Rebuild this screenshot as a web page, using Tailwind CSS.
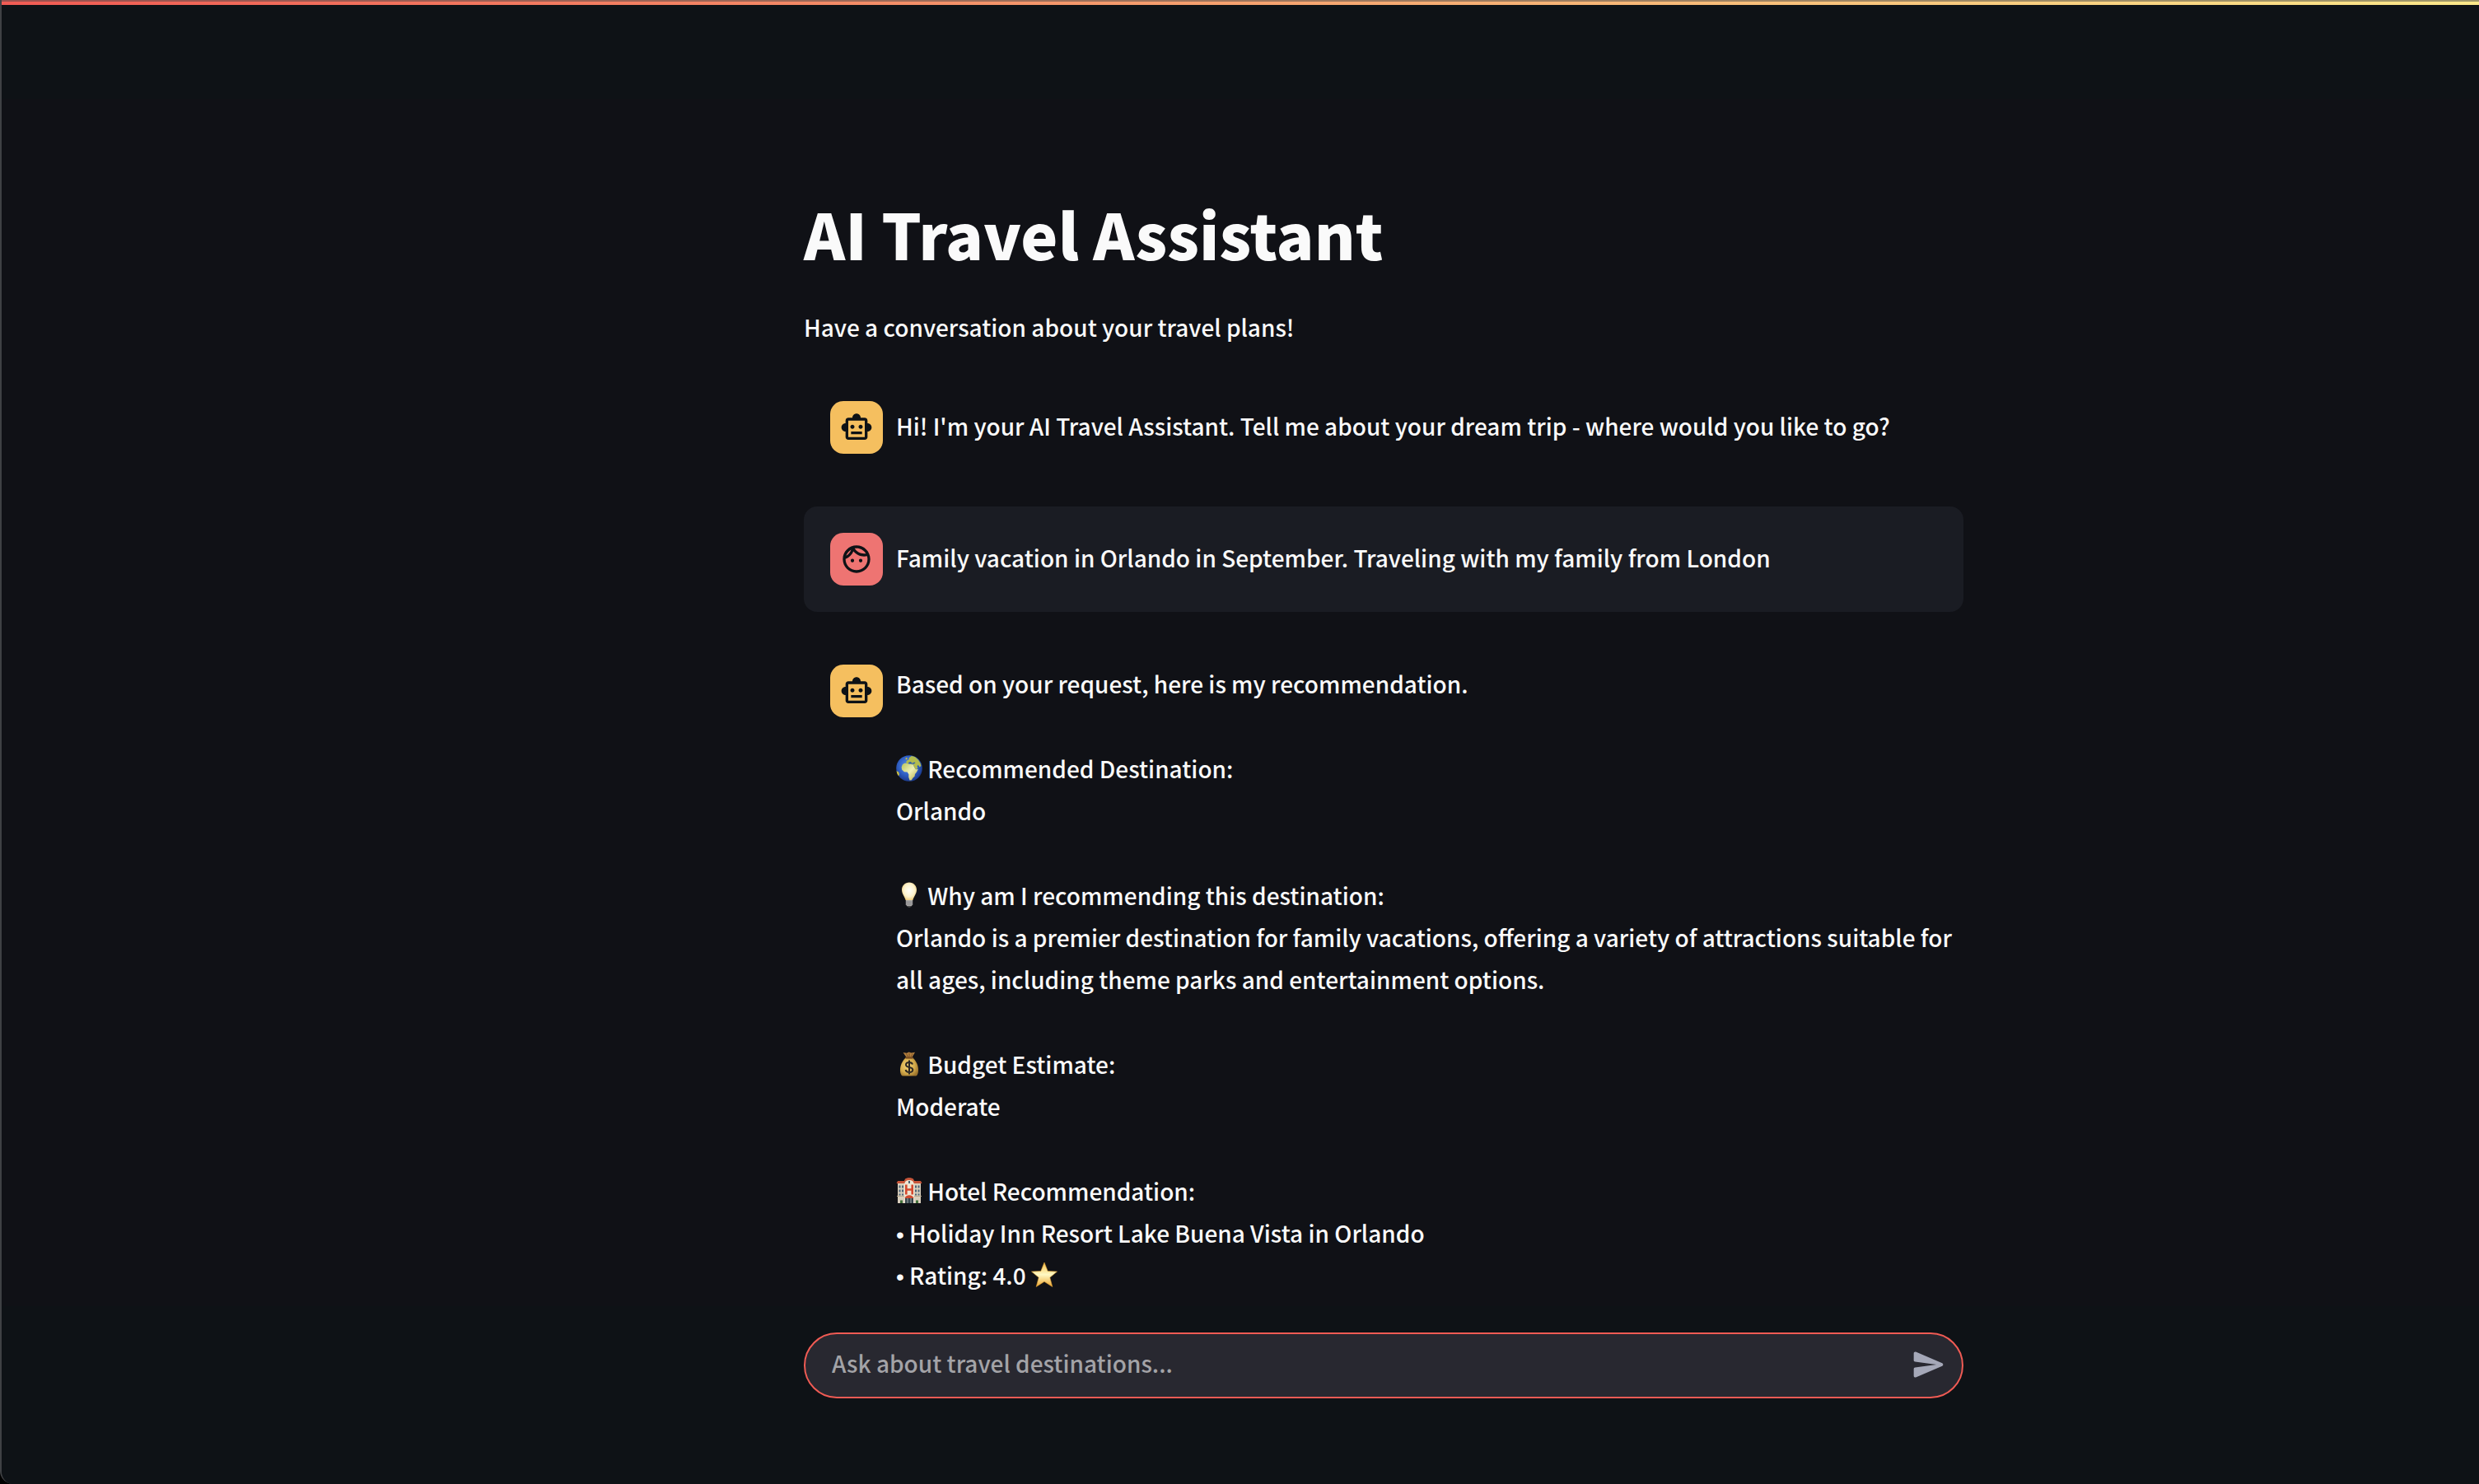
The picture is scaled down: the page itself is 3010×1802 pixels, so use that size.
<!DOCTYPE html>
<html lang="en">
<head>
<meta charset="utf-8">
<meta name="viewport" content="width=device-width, initial-scale=1">
<title>AI Travel Assistant</title>
<script src="https://cdn.jsdelivr.net/npm/@tailwindcss/browser@4"></script>
</head>
<body class="bg-black">
<svg class="hidden">
  <symbol id="bot" viewBox="0 0 24 24"><path d="M20 9V7c0-1.100-.9-2-2-2h-3c0-1.660-1.340-3-3-3S9 3.340 9 5H6c-1.100 0-2 .9-2 2v2c-1.660 0-3 1.340-3 3s1.340 3 3 3v4c0 1.100.9 2 2 2h12c1.100 0 2-.9 2-2v-4c1.660 0 3-1.340 3-3s-1.340-3-3-3zm-2 10H6V7h12v12zm-9-6c-.83 0-1.500-.67-1.500-1.500S8.170 10 9 10s1.500.67 1.500 1.500S9.830 13 9 13zm7.500-1.500c0 .83-.67 1.500-1.500 1.500s-1.500-.67-1.500-1.500.67-1.500 1.500-1.500 1.500.67 1.500 1.500zM8 15h8v2H8v-2z"/></symbol>
  <symbol id="face" viewBox="0 0 24 24"><path d="M10.250 13c0 .69-.56 1.250-1.250 1.250S7.750 13.690 7.750 13s.56-1.250 1.250-1.250 1.250.56 1.250 1.250zM15 11.750c-.69 0-1.250.56-1.250 1.250s.56 1.250 1.250 1.250 1.250-.56 1.250-1.250-.56-1.250-1.250-1.250zm7 .25c0 5.520-4.480 10-10 10S2 17.520 2 12 6.480 2 12 2s10 4.480 10 10zM10.660 4.120C12.060 6.440 14.600 8 17.500 8c.46 0 .91-.05 1.340-.12C17.440 5.560 14.900 4 12 4c-.46 0-.91.05-1.340.12zM4.420 9.470c1.710-.97 3.030-2.550 3.660-4.440C6.370 6 5.050 7.580 4.420 9.470zM20 12c0-.78-.12-1.530-.33-2.240-.7.150-1.420.24-2.170.24-3.130 0-5.920-1.440-7.760-3.690C8.690 8.870 6.600 10.880 4 11.860c.01.04 0 .09 0 .14 0 4.410 3.590 8 8 8s8-3.590 8-8z"/></symbol>
</svg>
<div class="relative flex min-h-screen flex-col overflow-hidden rounded-bl-[16px] border-l-2 border-[#3f4144] bg-[#101116] font-['Noto_Sans_CJK_SC',sans-serif] text-[28px] leading-[51px] font-medium text-[#fafafa]">
  <header class="h-30 bg-[#0e1216]">
    <div class="h-1.5 border-t-2 border-[#45474a]/50 bg-linear-to-r/srgb from-[#f05b54] to-[#fbe88a]"></div>
  </header>

  <main class="flex-1 pt-[110px] pl-[348px]">
    <div class="mx-auto max-w-[1408px]">
      <h1 class="text-[76px] leading-[106px] font-black">AI Travel Assistant</h1>
      <p class="mt-9">Have a conversation about your travel plans!</p>

      <section class="mt-8 flex flex-col gap-8" aria-label="Conversation">
        <article class="flex gap-4 py-8 pl-8">
          <div class="flex size-16 shrink-0 items-center justify-center rounded-2xl bg-[#f5bf5f] text-[#0e1216]"><svg class="size-10 fill-current" aria-hidden="true"><use href="#bot"/></svg></div>
          <div class="flex min-h-16 flex-1 flex-col justify-center pb-1"><p>Hi! I'm your AI Travel Assistant. Tell me about your dream trip - where would you like to go?</p></div>
        </article>

        <article class="flex gap-4 rounded-2xl bg-[#1a1c23] py-8 pl-8">
          <div class="flex size-16 shrink-0 items-center justify-center rounded-2xl bg-[#ee7472] text-[#0e1216]"><svg class="size-10 fill-current" aria-hidden="true"><use href="#face"/></svg></div>
          <div class="flex min-h-16 flex-1 flex-col justify-center pb-1"><p>Family vacation in Orlando in September. Traveling with my family from London</p></div>
        </article>

        <article class="flex gap-4 pt-8 pl-8">
          <div class="flex size-16 shrink-0 items-center justify-center rounded-2xl bg-[#f5bf5f] text-[#0e1216]"><svg class="size-10 fill-current" aria-hidden="true"><use href="#bot"/></svg></div>
          <div class="-mt-0.5 flex min-h-16 flex-1 flex-col gap-[52px]">
            <p>Based on your request, here is my recommendation.</p>
            <p>
              <svg class="inline size-8 align-[-4px]" viewBox="0 0 32 32" role="img" aria-label="Globe">
                <defs><radialGradient id="sea" cx=".45" cy=".4" r=".6"><stop offset="0" stop-color="#5b93ea"/><stop offset=".6" stop-color="#2f5fc4"/><stop offset="1" stop-color="#1b3a8c"/></radialGradient>
                <linearGradient id="land" x1="0" y1="0" x2="1" y2="1"><stop offset="0" stop-color="#b9c45a"/><stop offset=".5" stop-color="#eef0b4"/><stop offset="1" stop-color="#b5ac45"/></linearGradient></defs>
                <circle cx="16" cy="16" r="15.800" fill="url(#sea)"/>
                <path d="M7.500 12c1-2 3-2.500 5.500-2.300l2 1 3 .3 3 .6 1 3 2 2.600 2.800-.3-1.800 3.600-2 2.500-.5 2.800-2.200 2-1.500 2.400-2.300.2-1.200-3.600.1-3.600-1.700-2.700-3.800-.3-2.700-2.400-.6-3z" fill="url(#land)"/>
                <path d="M12 8.500l1.200-2 2.300-1.200.4-2.200 3-2 4 1 4 3.300 2.500 4 1 3.500-1.800 1.500-1.800-2.600-1.300 1.800 1 2.400-2.700 1.300-2-3.600-1-2.400-3-.3-1.500-1.400-1.800 1.500z" fill="#b2bc4e"/>
                <path d="M11.500 3.500l1.800-.8.300 2.200-1.800.6zM.6 19.200l2.400 1 1 2.800-.8 2.200C1.500 23.500.8 21.300.6 19.200z" fill="#c8bd42"/>
                <path d="M14.500 9l3-1 2.500 1.700 2-1.200 1.500.6-1.800 1.600-3-.2-2.600-.2z" fill="#2f5fb0"/>
              </svg> Recommended Destination:<br>
              Orlando
            </p>
            <p>
              <svg class="inline size-8 align-[-4px]" viewBox="0 0 32 32" role="img" aria-label="Light bulb">
                <defs><radialGradient id="glow" cx=".5" cy=".45" r=".6"><stop offset="0" stop-color="#fffffa"/><stop offset=".6" stop-color="#fdf3cd"/><stop offset="1" stop-color="#edc873"/></radialGradient></defs>
                <path d="M16 .5c-5.200 0-9 4-9 9 0 5.200 3.600 8 4.600 12.500h8.800C21.400 17.500 25 14.700 25 9.500c0-5-3.800-9-9-9z" fill="url(#glow)"/>
                <path d="M11.800 22h8.400v5.500l-1.800 2h-4.800l-1.800-2z" fill="#aaa9a8"/><path d="M12 24.300h8M12 26.800h8" stroke="#77767a" stroke-width=".8"/><path d="M14 29.300h4l-.8 1.700h-2.400z" fill="#444"/>
              </svg> Why am I recommending this destination:<br>
              Orlando is a premier destination for family vacations, offering a variety of attractions suitable for all ages, including theme parks and entertainment options.
            </p>
            <p>
              <svg class="inline size-8 align-[-4px]" viewBox="0 0 32 32" role="img" aria-label="Money bag">
                <defs><radialGradient id="sack" cx=".4" cy=".45" r=".65"><stop offset="0" stop-color="#f3d276"/><stop offset=".6" stop-color="#d6ad4c"/><stop offset="1" stop-color="#9a722c"/></radialGradient></defs>
                <path d="M8.500 2l4.500.8L15.500 1.500l3 1 4.500-.8-3.500 6h-7z" fill="#b27e3d"/><path d="M12.500 3.500l2 4M16 3v4.500M20 3.500l-2 4" stroke="#70481f" stroke-width=".8"/>
                <path d="M12 8h8c3 3 6.500 7.500 7 14 .3 4-1 8.500-3 8.500H8c-2 0-3.300-4.500-3-8.500C5.500 15.500 9 11 12 8z" fill="url(#sack)"/>
                <path d="M11.500 8.600h9" stroke="#7a4d22" stroke-width="2"/>
                <path d="M20 16.500c-.6-2-2-2.500-4-2.500-2.400 0-4 1-4 3 0 4.200 8.300 1.800 8.300 6 0 2-1.800 3-4.200 3-2.500 0-4.100-1-4.500-3M16 11.500v17" fill="none" stroke="#2c2823" stroke-width="2"/>
              </svg> Budget Estimate:<br>
              Moderate
            </p>
            <p>
              <svg class="inline size-8 align-[-4px]" viewBox="0 0 32 32" role="img" aria-label="Hotel">
                <path d="M2 6h28v25H2z" fill="#d9cfbd"/><path d="M10 6c0-7 12-7 12 0v25H10z" fill="#efe5d3"/>
                <path d="M.5 7l1.500-3h8l1-2.500C13.500-.3 18.500-.3 21 1.500L22 4h8l1.500 3H21.500c0-5.500-11-5.500-11 0z" fill="#c9553a"/>
                <path d="M12.300 8.500v12M19.700 8.500v12M12.300 14.500h7.400" stroke="#d4492f" stroke-width="2.600"/>
                <path d="M3.500 9.500h2v3h-2zm3.500 0h2v3H7zm-3.500 5h2v3h-2zm3.500 0h2v3H7zm-3.500 5h2v2h-2zm3.500 0h2v2H7zm16-10h2v3h-2zm3.500 0h2v3h-2zm-3.500 5h2v3h-2zm3.500 0h2v3h-2zm-3.500 5h2v2h-2zm3.500 0h2v2h-2zM15 4h2v3h-2z" fill="#4d6478"/>
                <path d="M11 24.500h10V31H11z" fill="#36454c"/><path d="M14 25v6M18 25v6" stroke="#9fa9a6"/><path d="M10.500 25c1.500-5 9.500-5 11 0z" fill="#cf4a31"/><path d="M1 22.500h9M22 22.500h9" stroke="#b9a88c"/><path d="M5 27.500h3V31H5zm19 0h3V31h-3z" fill="#43713c"/>
              </svg> Hotel Recommendation:<br>
              <span class="font-['Liberation_Sans',sans-serif] leading-none">•</span> Holiday Inn Resort Lake Buena Vista in Orlando<br>
              <span class="font-['Liberation_Sans',sans-serif] leading-none">•</span> Rating: 4.0 <svg class="inline size-8 align-[-4px]" viewBox="0 0 32 32" role="img" aria-label="Star">
                <defs><linearGradient id="gold" x1="0" y1="0" x2="0" y2="1"><stop offset="0" stop-color="#f4bd45"/><stop offset=".5" stop-color="#fff9c4"/><stop offset="1" stop-color="#eda62f"/></linearGradient></defs>
                <path d="M16 1l4.200 10.500 11.300.6-8.700 7.200 3 11.200L16 24.300 6.200 30.500l3-11.200L.5 12.100l11.300-.6z" fill="url(#gold)" stroke="#d99a30" stroke-width=".6" stroke-linejoin="round"/>
              </svg>
            </p>
          </div>
        </article>
      </section>
    </div>
  </main>

  <footer class="bg-[#0e1216] pt-8 pb-26 pl-[348px]">
    <form class="mx-auto flex h-20 max-w-[1408px] items-center rounded-full border-2 border-[#f05b54] bg-[#282830] pr-3 pb-0.5 pl-8">
      <input type="text" aria-label="Message" placeholder="Ask about travel destinations..." class="min-w-0 flex-1 bg-transparent pb-1 outline-none placeholder:text-[#a3a3a7]">
      <button type="button" aria-label="Send message" class="flex size-14 items-center justify-center text-[#a5a8b8]">
        <svg class="size-11 fill-current" viewBox="0 0 24 24" aria-hidden="true"><path d="M3.400 20.400l17.450-7.480c.81-.35.81-1.490 0-1.840L3.400 3.600c-.66-.29-1.390.2-1.390.91L2 9.120c0 .5.370.93.870.99L17 12 2.870 13.880c-.5.070-.87.500-.87 1l.01 4.610c0 .71.73 1.200 1.390.91z"/></svg>
      </button>
    </form>
  </footer>
</div>
</body>
</html>
